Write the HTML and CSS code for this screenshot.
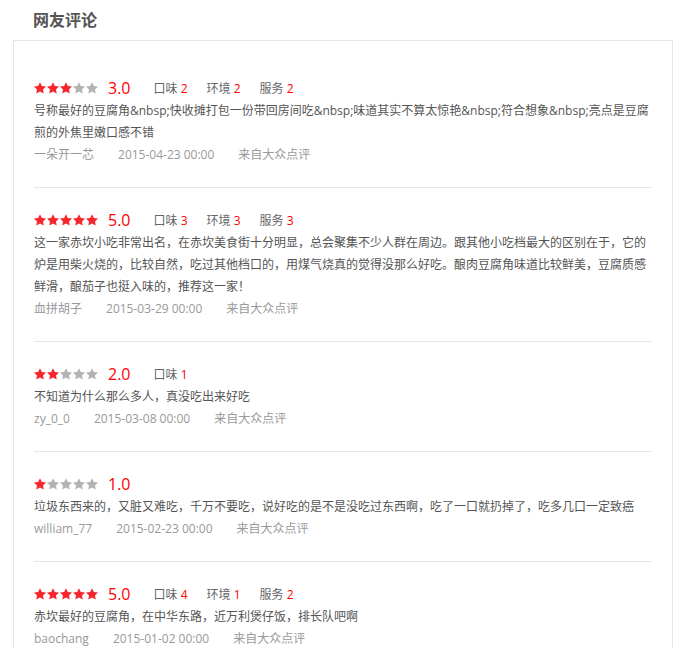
FILE: index.html
```html
<!DOCTYPE html>
<html lang="zh-CN">
<head>
  <meta charset="UTF-8" />
  <meta name="viewport" content="width=device-width, initial-scale=1.0"/>
  <title>网友评论</title>
  <link rel="stylesheet" href="styles.css">
</head>
<body>
  <div class="comments">
    <h2 class="comments-title">网友评论</h2>
    <div class="comment-box">

      <div class="comment">
        <div class="rating">
          <span class="stars">
            <svg class="star on" viewBox="2 2 20 19.5"><polygon points="12,2 15.09,8.26 22,9.27 17,14.14 18.18,21.02 12,17.77 5.82,21.02 7,14.14 2,9.27 8.91,8.26"/></svg>
            <svg class="star on" viewBox="2 2 20 19.5"><polygon points="12,2 15.09,8.26 22,9.27 17,14.14 18.18,21.02 12,17.77 5.82,21.02 7,14.14 2,9.27 8.91,8.26"/></svg>
            <svg class="star on" viewBox="2 2 20 19.5"><polygon points="12,2 15.09,8.26 22,9.27 17,14.14 18.18,21.02 12,17.77 5.82,21.02 7,14.14 2,9.27 8.91,8.26"/></svg>
            <svg class="star" viewBox="2 2 20 19.5"><polygon points="12,2 15.09,8.26 22,9.27 17,14.14 18.18,21.02 12,17.77 5.82,21.02 7,14.14 2,9.27 8.91,8.26"/></svg>
            <svg class="star" viewBox="2 2 20 19.5"><polygon points="12,2 15.09,8.26 22,9.27 17,14.14 18.18,21.02 12,17.77 5.82,21.02 7,14.14 2,9.27 8.91,8.26"/></svg>
          </span>
          <span class="score">3.0</span>
          <span class="item">口味 <em>2</em></span>
          <span class="item">环境 <em>2</em></span>
          <span class="item">服务 <em>2</em></span>
        </div>
        <p class="content">号称最好的豆腐角&amp;nbsp;快收摊打包一份带回房间吃&amp;nbsp;味道其实不算太惊艳&amp;nbsp;符合想象&amp;nbsp;亮点是豆腐煎的外焦里嫩口感不错</p>
        <div class="meta">
          <span>一朵开一芯</span>
          <span>2015-04-23 00:00</span>
          <span>来自大众点评</span>
        </div>
      </div>

      <div class="comment">
        <div class="rating">
          <span class="stars">
            <svg class="star on" viewBox="2 2 20 19.5"><polygon points="12,2 15.09,8.26 22,9.27 17,14.14 18.18,21.02 12,17.77 5.82,21.02 7,14.14 2,9.27 8.91,8.26"/></svg>
            <svg class="star on" viewBox="2 2 20 19.5"><polygon points="12,2 15.09,8.26 22,9.27 17,14.14 18.18,21.02 12,17.77 5.82,21.02 7,14.14 2,9.27 8.91,8.26"/></svg>
            <svg class="star on" viewBox="2 2 20 19.5"><polygon points="12,2 15.09,8.26 22,9.27 17,14.14 18.18,21.02 12,17.77 5.82,21.02 7,14.14 2,9.27 8.91,8.26"/></svg>
            <svg class="star on" viewBox="2 2 20 19.5"><polygon points="12,2 15.09,8.26 22,9.27 17,14.14 18.18,21.02 12,17.77 5.82,21.02 7,14.14 2,9.27 8.91,8.26"/></svg>
            <svg class="star on" viewBox="2 2 20 19.5"><polygon points="12,2 15.09,8.26 22,9.27 17,14.14 18.18,21.02 12,17.77 5.82,21.02 7,14.14 2,9.27 8.91,8.26"/></svg>
          </span>
          <span class="score">5.0</span>
          <span class="item">口味 <em>3</em></span>
          <span class="item">环境 <em>3</em></span>
          <span class="item">服务 <em>3</em></span>
        </div>
        <p class="content">这一家赤坎小吃非常出名，在赤坎美食街十分明显，总会聚集不少人群在周边。跟其他小吃档最大的区别在于，它的炉是用柴火烧的，比较自然，吃过其他档口的，用煤气烧真的觉得没那么好吃。酿肉豆腐角味道比较鲜美，豆腐质感鲜滑，酿茄子也挺入味的，推荐这一家！</p>
        <div class="meta">
          <span>血拼胡子</span>
          <span>2015-03-29 00:00</span>
          <span>来自大众点评</span>
        </div>
      </div>

      <div class="comment">
        <div class="rating">
          <span class="stars">
            <svg class="star on" viewBox="2 2 20 19.5"><polygon points="12,2 15.09,8.26 22,9.27 17,14.14 18.18,21.02 12,17.77 5.82,21.02 7,14.14 2,9.27 8.91,8.26"/></svg>
            <svg class="star on" viewBox="2 2 20 19.5"><polygon points="12,2 15.09,8.26 22,9.27 17,14.14 18.18,21.02 12,17.77 5.82,21.02 7,14.14 2,9.27 8.91,8.26"/></svg>
            <svg class="star" viewBox="2 2 20 19.5"><polygon points="12,2 15.09,8.26 22,9.27 17,14.14 18.18,21.02 12,17.77 5.82,21.02 7,14.14 2,9.27 8.91,8.26"/></svg>
            <svg class="star" viewBox="2 2 20 19.5"><polygon points="12,2 15.09,8.26 22,9.27 17,14.14 18.18,21.02 12,17.77 5.82,21.02 7,14.14 2,9.27 8.91,8.26"/></svg>
            <svg class="star" viewBox="2 2 20 19.5"><polygon points="12,2 15.09,8.26 22,9.27 17,14.14 18.18,21.02 12,17.77 5.82,21.02 7,14.14 2,9.27 8.91,8.26"/></svg>
          </span>
          <span class="score">2.0</span>
          <span class="item">口味 <em>1</em></span>
        </div>
        <p class="content">不知道为什么那么多人，真没吃出来好吃</p>
        <div class="meta">
          <span>zy_0_0</span>
          <span>2015-03-08 00:00</span>
          <span>来自大众点评</span>
        </div>
      </div>

      <div class="comment">
        <div class="rating">
          <span class="stars">
            <svg class="star on" viewBox="2 2 20 19.5"><polygon points="12,2 15.09,8.26 22,9.27 17,14.14 18.18,21.02 12,17.77 5.82,21.02 7,14.14 2,9.27 8.91,8.26"/></svg>
            <svg class="star" viewBox="2 2 20 19.5"><polygon points="12,2 15.09,8.26 22,9.27 17,14.14 18.18,21.02 12,17.77 5.82,21.02 7,14.14 2,9.27 8.91,8.26"/></svg>
            <svg class="star" viewBox="2 2 20 19.5"><polygon points="12,2 15.09,8.26 22,9.27 17,14.14 18.18,21.02 12,17.77 5.82,21.02 7,14.14 2,9.27 8.91,8.26"/></svg>
            <svg class="star" viewBox="2 2 20 19.5"><polygon points="12,2 15.09,8.26 22,9.27 17,14.14 18.18,21.02 12,17.77 5.82,21.02 7,14.14 2,9.27 8.91,8.26"/></svg>
            <svg class="star" viewBox="2 2 20 19.5"><polygon points="12,2 15.09,8.26 22,9.27 17,14.14 18.18,21.02 12,17.77 5.82,21.02 7,14.14 2,9.27 8.91,8.26"/></svg>
          </span>
          <span class="score">1.0</span>
        </div>
        <p class="content">垃圾东西来的，又脏又难吃，千万不要吃，说好吃的是不是没吃过东西啊，吃了一口就扔掉了，吃多几口一定致癌</p>
        <div class="meta">
          <span>william_77</span>
          <span>2015-02-23 00:00</span>
          <span>来自大众点评</span>
        </div>
      </div>

      <div class="comment">
        <div class="rating">
          <span class="stars">
            <svg class="star on" viewBox="2 2 20 19.5"><polygon points="12,2 15.09,8.26 22,9.27 17,14.14 18.18,21.02 12,17.77 5.82,21.02 7,14.14 2,9.27 8.91,8.26"/></svg>
            <svg class="star on" viewBox="2 2 20 19.5"><polygon points="12,2 15.09,8.26 22,9.27 17,14.14 18.18,21.02 12,17.77 5.82,21.02 7,14.14 2,9.27 8.91,8.26"/></svg>
            <svg class="star on" viewBox="2 2 20 19.5"><polygon points="12,2 15.09,8.26 22,9.27 17,14.14 18.18,21.02 12,17.77 5.82,21.02 7,14.14 2,9.27 8.91,8.26"/></svg>
            <svg class="star on" viewBox="2 2 20 19.5"><polygon points="12,2 15.09,8.26 22,9.27 17,14.14 18.18,21.02 12,17.77 5.82,21.02 7,14.14 2,9.27 8.91,8.26"/></svg>
            <svg class="star on" viewBox="2 2 20 19.5"><polygon points="12,2 15.09,8.26 22,9.27 17,14.14 18.18,21.02 12,17.77 5.82,21.02 7,14.14 2,9.27 8.91,8.26"/></svg>
          </span>
          <span class="score">5.0</span>
          <span class="item">口味 <em>4</em></span>
          <span class="item">环境 <em>1</em></span>
          <span class="item">服务 <em>2</em></span>
        </div>
        <p class="content">赤坎最好的豆腐角，在中华东路，近万利煲仔饭，排长队吧啊</p>
        <div class="meta">
          <span>baochang</span>
          <span>2015-01-02 00:00</span>
          <span>来自大众点评</span>
        </div>
      </div>

    </div>
  </div>
</body>
</html>
```

FILE: styles.css
```css
body {
  margin: 0;
  font-family: "Open Sans", "Noto Sans CJK SC", "Microsoft YaHei", sans-serif;
  font-size: 12px;
  color: #555;
  background: #fff;
}
.comments {
  padding: 0 15px 0 13px;
}
.comments-title {
  margin: 0;
  padding-left: 20px;
  height: 40px;
  line-height: 40px;
  font-size: 16px;
  font-weight: bold;
  color: #555;
}
.comment-box {
  border: 1px solid #e6e6e6;
  padding: 15px 20px 0;
}
.comment {
  padding: 20px 0 21px;
  border-bottom: 1px solid #e6e6e6;
}
.rating {
  display: flex;
  align-items: center;
  height: 24px;
}
.stars {
  display: flex;
  margin-right: 9px;
}
.star {
  width: 12px;
  height: 12px;
  margin-right: 1px;
  fill: #b3b3b3;
}
.star.on { fill: #f5262c; }
.score {
  font-size: 16px;
  color: #f00;
  margin-right: 23px;
}
.item {
  color: #666;
  margin-right: 19px;
}
.item em {
  font-style: normal;
  color: #f00;
}
.content {
  margin: 0;
  line-height: 22px;
  color: #555;
}
.meta {
  display: flex;
  gap: 24px;
  line-height: 22px;
  color: #999;
}
```
